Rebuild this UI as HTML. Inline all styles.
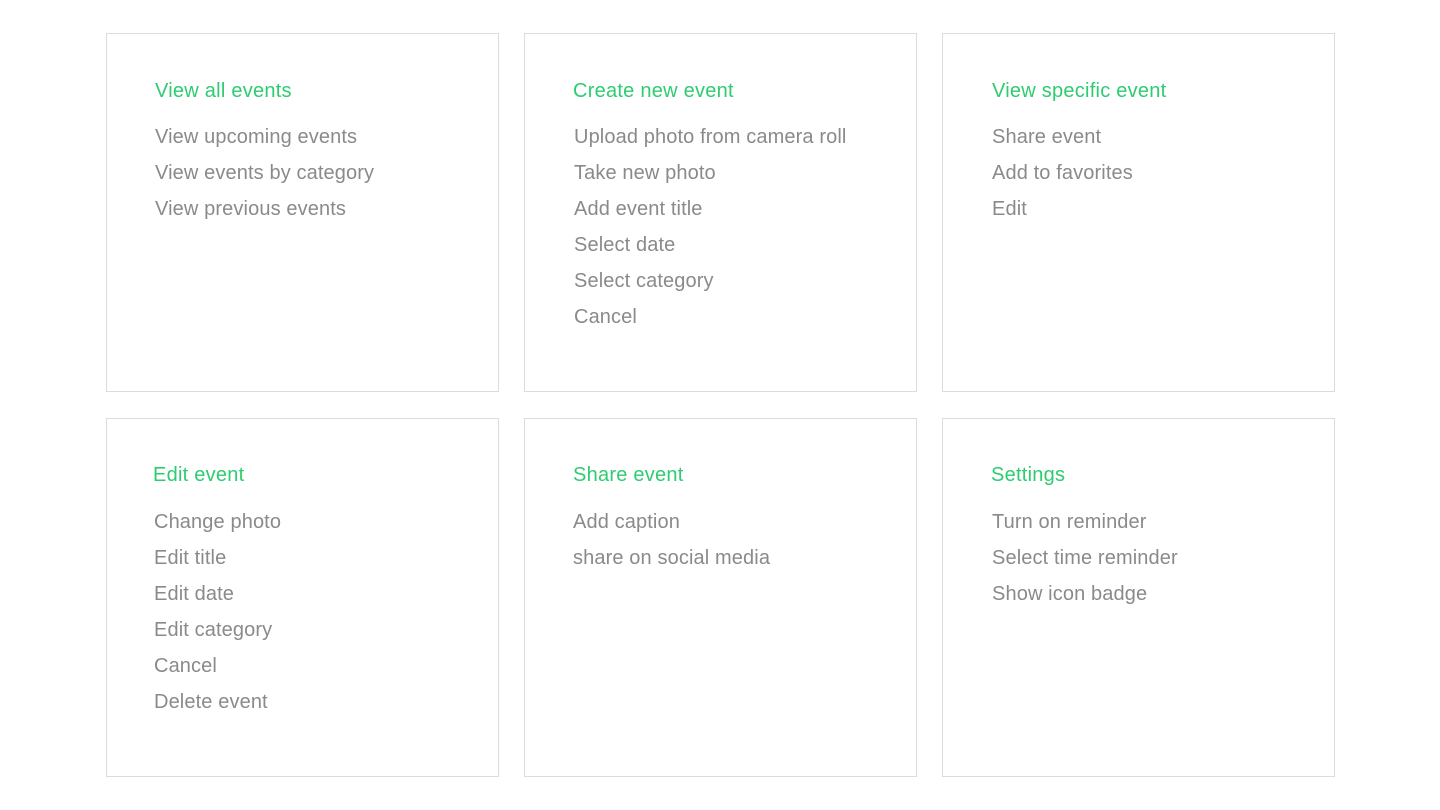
<!DOCTYPE html>
<html><head><style>
body{margin:0;width:1440px;height:810px;background:#fff;font-family:"Liberation Sans",Arial,sans-serif;position:relative;overflow:hidden}
.b{position:absolute;width:391px;height:357px;border:1px solid #dcdcdc;box-sizing:content-box}
.t{position:absolute;color:#2ecc71;font-size:20px;letter-spacing:0.25px;line-height:24px;white-space:nowrap}
.i{position:absolute;color:#8a8a8a;font-size:20px;letter-spacing:0.12px;line-height:36px;white-space:nowrap}
</style></head><body>
<div class="b" style="left:106px;top:33px"></div>
<div class="b" style="left:524px;top:33px"></div>
<div class="b" style="left:942px;top:33px"></div>
<div class="b" style="left:106px;top:418px"></div>
<div class="b" style="left:524px;top:418px"></div>
<div class="b" style="left:942px;top:418px"></div>

<div class="t" style="left:155px;top:79px">View all events</div>
<div class="i" style="left:155px;top:119px">View upcoming events<br>View events by category<br>View previous events</div>

<div class="t" style="left:573px;top:79px">Create new event</div>
<div class="i" style="left:574px;top:119px">Upload photo from camera roll<br>Take new photo<br>Add event title<br>Select date<br>Select category<br>Cancel</div>

<div class="t" style="left:992px;top:79px">View specific event</div>
<div class="i" style="left:992px;top:119px">Share event<br>Add to favorites<br>Edit</div>

<div class="t" style="left:153px;top:463px">Edit event</div>
<div class="i" style="left:154px;top:504px">Change photo<br>Edit title<br>Edit date<br>Edit category<br>Cancel<br>Delete event</div>

<div class="t" style="left:573px;top:463px">Share event</div>
<div class="i" style="left:573px;top:504px">Add caption<br>share on social media</div>

<div class="t" style="left:991px;top:463px">Settings</div>
<div class="i" style="left:992px;top:504px">Turn on reminder<br>Select time reminder<br>Show icon badge</div>
</body></html>
